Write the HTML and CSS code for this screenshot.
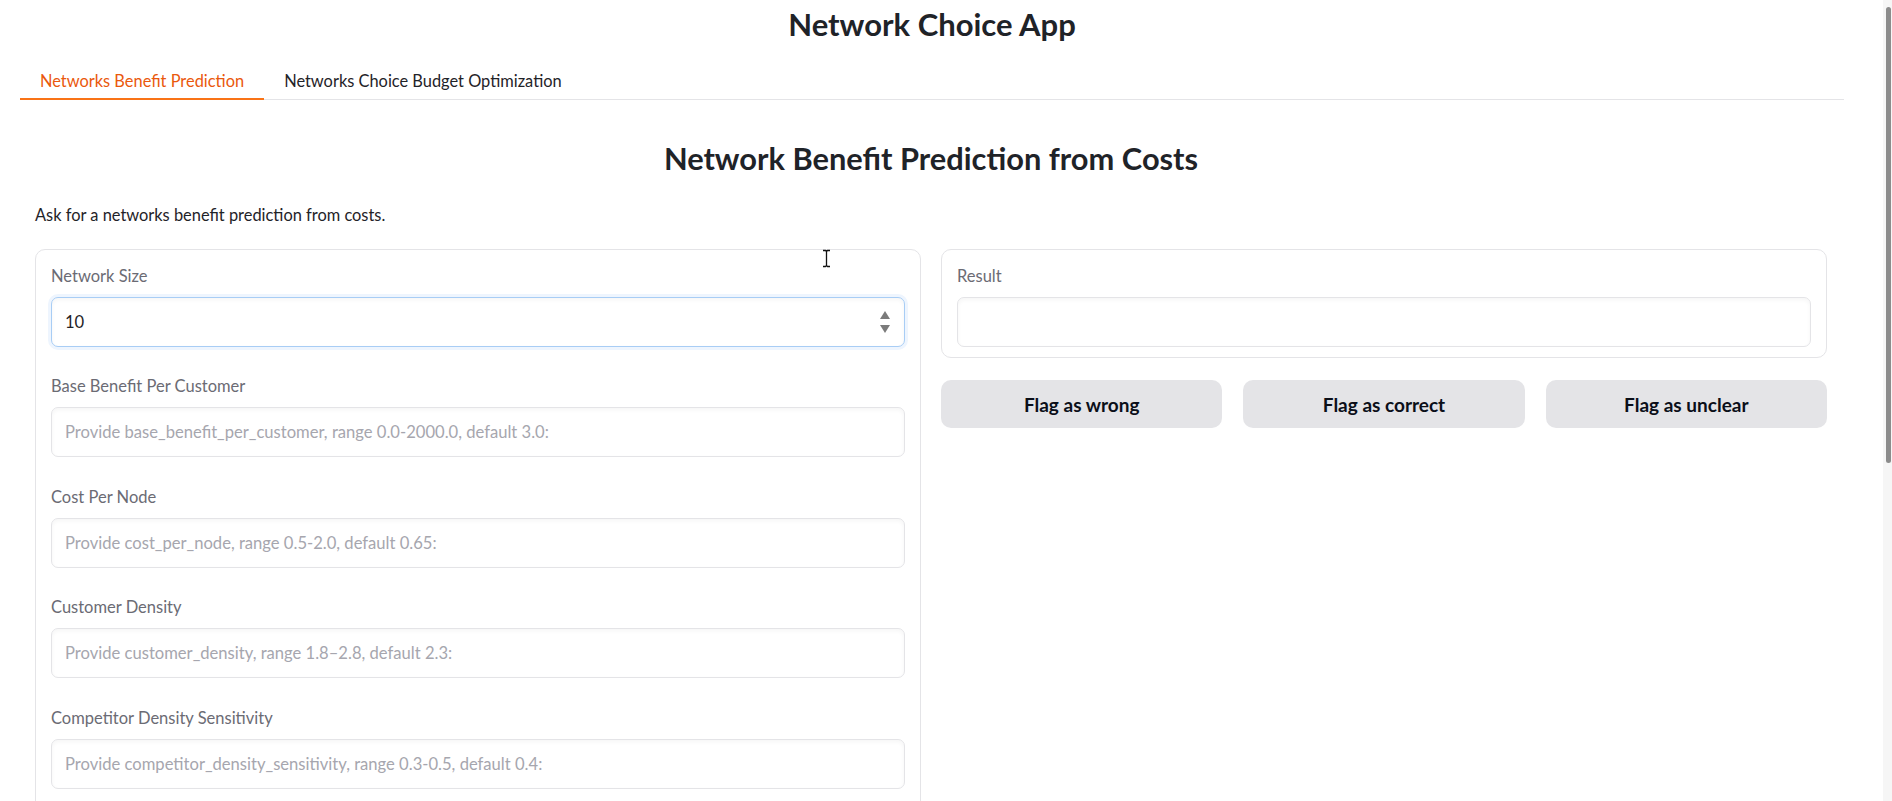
FILE: index.html
```html
<!DOCTYPE html>
<html lang="en">
<head>
<meta charset="utf-8">
<title>Network Choice App</title>
<link rel="stylesheet" href="styles.css">
</head>
<body>
<div class="app">
  <h1 class="app-title">Network Choice App</h1>
  <div class="tabs">
    <button class="tab active">Networks Benefit Prediction</button>
    <button class="tab">Networks Choice Budget Optimization</button>
  </div>
  <div class="tab-panel">
    <h2 class="section-title">Network Benefit Prediction from Costs</h2>
    <p class="desc">Ask for a networks benefit prediction from costs.</p>
    <div class="columns">
      <div class="col">
        <div class="block block-inputs">
          <div class="field">
            <label class="label">Network Size</label>
            <div class="input-wrap">
              <input class="input focused" type="text" value="10">
              <svg class="spinner" width="12" height="24" viewBox="0 0 12 24"><path d="M6 1 L11 9 L1 9 Z" fill="#7b7b7b"/><path d="M1 15 L11 15 L6 23 Z" fill="#7b7b7b"/></svg>
            </div>
          </div>
          <div class="field">
            <label class="label">Base Benefit Per Customer</label>
            <input class="input" type="text" placeholder="Provide base_benefit_per_customer, range 0.0-2000.0, default 3.0:">
          </div>
          <div class="field">
            <label class="label">Cost Per Node</label>
            <input class="input" type="text" placeholder="Provide cost_per_node, range 0.5-2.0, default 0.65:">
          </div>
          <div class="field">
            <label class="label">Customer Density</label>
            <input class="input" type="text" placeholder="Provide customer_density, range 1.8–2.8, default 2.3:">
          </div>
          <div class="field">
            <label class="label">Competitor Density Sensitivity</label>
            <input class="input" type="text" placeholder="Provide competitor_density_sensitivity, range 0.3-0.5, default 0.4:">
          </div>
        </div>
      </div>
      <div class="col">
        <div class="block block-result">
          <div class="field">
            <label class="label">Result</label>
            <input class="input" type="text" readonly>
          </div>
        </div>
        <div class="buttons">
          <button class="btn">Flag as wrong</button>
          <button class="btn">Flag as correct</button>
          <button class="btn">Flag as unclear</button>
        </div>
      </div>
    </div>
  </div>
</div>
<svg class="cursor" width="9" height="19" viewBox="0 0 9 19"><path d="M1 1.5 H3.5 L4.5 2.5 L5.5 1.5 H8 M4.5 2.5 V16.5 M1 17.5 H3.5 L4.5 16.5 L5.5 17.5 H8" fill="none" stroke="#111" stroke-width="1.3"/></svg>
<div class="scrollbar"><div class="thumb"></div></div>
</body>
</html>
```

FILE: styles.css
```css
html, body {
  margin: 0;
  padding: 0;
  overflow: hidden;
  height: 801px;
  background: #ffffff;
}
body {
  font-family: Lato, "Open Sans", sans-serif;
  color: #27272a;
}
.app {
  margin-left: 20px;
  width: 1824px;
}
.app-title {
  margin: 0;
  height: 48px;
  line-height: 48px;
  text-align: center;
  font-size: 31px;
  font-weight: 700;
  color: #1f2328;
}
.tabs {
  margin-top: 12px;
  display: flex;
  border-bottom: 1px solid #e4e4e7;
}
.tab {
  font-family: inherit;
  font-size: 16.4px;
  line-height: 24px;
  padding: 9px 20px 5px;
  margin-bottom: -1px;
  background: none;
  border: none;
  border-bottom: 2px solid transparent;
  color: #1f2328;
  cursor: pointer;
}
.tab.active {
  color: #ea580c;
  border-bottom-color: #f97316;
}
.tab-panel {
  padding: 0 17px 0 15px;
}
.section-title {
  margin: 39px 0 0;
  line-height: 40px;
  text-align: center;
  font-size: 30.8px;
  font-weight: 700;
  color: #1f2328;
}
.desc {
  margin: 24px 0 0;
  font-size: 16.4px;
  line-height: 24px;
  color: #1f2328;
}
.columns {
  margin-top: 22px;
  display: grid;
  grid-template-columns: 1fr 1fr;
  gap: 20px;
}
.block {
  border: 1px solid #e4e4e7;
  border-radius: 10px;
  padding: 14px 15px 10px;
  display: flex;
  flex-direction: column;
  gap: 27.4px;
}
.block-inputs {
  padding-bottom: 60px;
}
.field {
  display: flex;
  flex-direction: column;
  gap: 11px;
}
.label {
  font-size: 16.5px;
  line-height: 20px;
  padding-top: 2px;
  color: #6b6b74;
}
.input-wrap {
  position: relative;
}
.input {
  box-sizing: border-box;
  width: 100%;
  height: 50px;
  border: 1px solid #e4e4e7;
  border-radius: 7px;
  padding: 0 13px;
  font-family: inherit;
  font-size: 16.6px;
  color: #1f2328;
  background: #fff;
  box-shadow: inset 0 2px 4px rgba(0,0,0,0.04);
  outline: none;
}
.input::placeholder {
  color: #a6a6ae;
}
.input.focused {
  border-color: #a8cdf5;
  box-shadow: 0 0 0 3px #eef5fe, inset 0 2px 4px rgba(0,0,0,0.04);
}
.spinner {
  position: absolute;
  right: 14px;
  top: 13px;
}
.buttons {
  margin-top: 22px;
  display: grid;
  grid-template-columns: 1fr 1fr 1fr;
  gap: 21px;
}
.btn {
  height: 48px;
  border: none;
  border-radius: 10px;
  background: #e4e4e7;
  font-family: inherit;
  font-size: 19px;
  font-weight: 700;
  color: #0b0f19;
  cursor: pointer;
}
.cursor {
  position: fixed;
  left: 822px;
  top: 249px;
}
.scrollbar {
  position: fixed;
  top: 0;
  right: 0;
  width: 9px;
  height: 801px;
  background: #f6f6f6;
}
.thumb {
  position: absolute;
  right: 1px;
  top: 7px;
  width: 5px;
  height: 456px;
  border-radius: 3px;
  background: #8c8c8c;
}
```
